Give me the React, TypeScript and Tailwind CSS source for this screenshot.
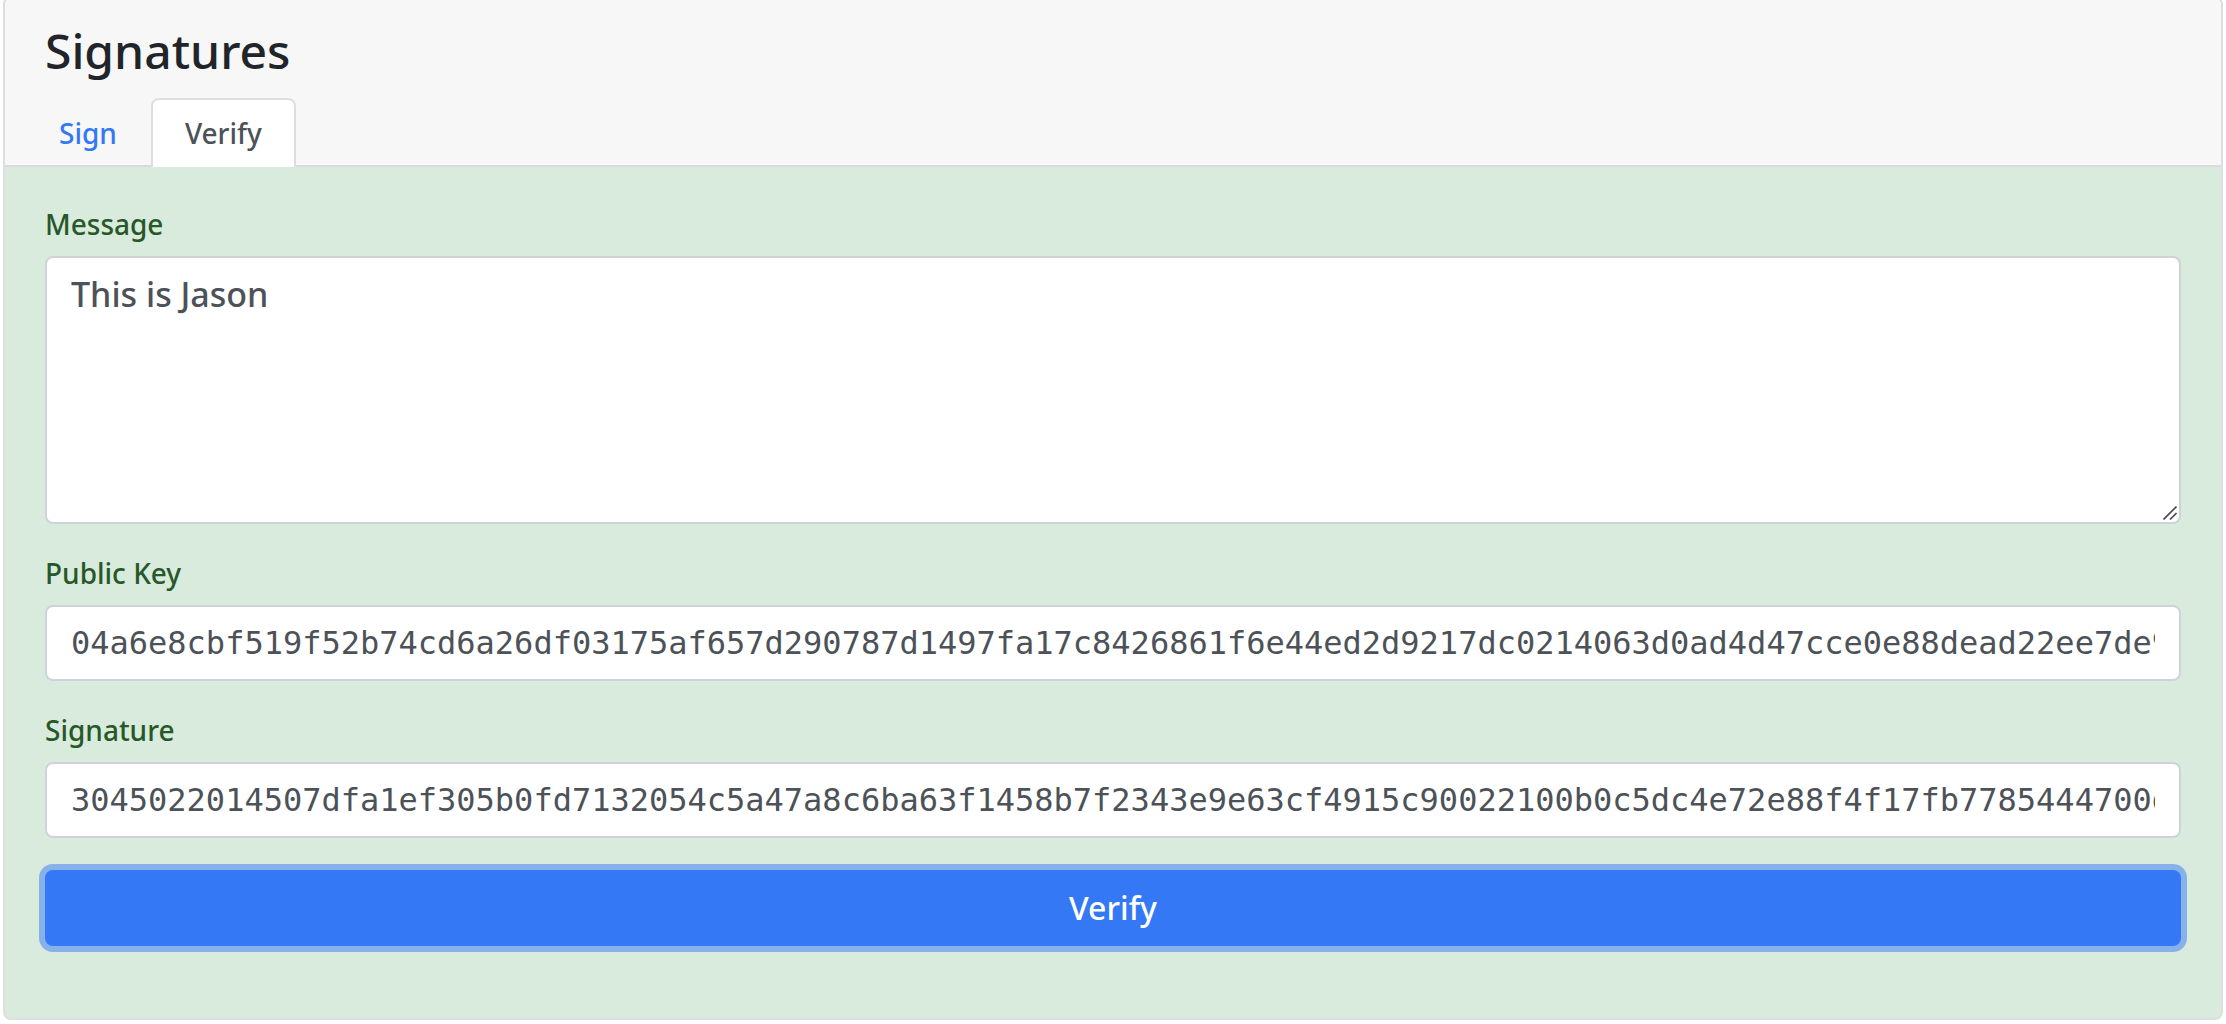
import { useState } from 'react'
import type { ReactNode } from 'react'

const PUBLIC_KEY =
  '04a6e8cbf519f52b74cd6a26df03175af657d290787d1497fa17c8426861f6e44ed2d9217dc0214063d0ad4d47cce0e88dead22ee7de9'
const SIGNATURE =
  '3045022014507dfa1ef305b0fd7132054c5a47a8c6ba63f1458b7f2343e9e63cf4915c90022100b0c5dc4e72e88f4f17fb7785444700d'

const inputClass =
  "block h-[76px] w-full rounded-lg border-2 border-[#ced3da] bg-white px-6 font-['DejaVu_Sans_Mono',monospace] text-[32px] text-[#4c5258] outline-none"

function Field({ id, label, children }: { id: string; label: string; children: ReactNode }) {
  return (
    <div className="mb-8">
      <label htmlFor={id} className="mb-[15px] block text-[28px] leading-[34px] text-[#28572a]">
        {label}
      </label>
      {children}
    </div>
  )
}

function ResizeGrip() {
  return (
    <svg
      className="pointer-events-none absolute right-1 bottom-1 h-[14px] w-[14px]"
      viewBox="0 0 14 14"
      fill="none"
      stroke="#4a4a4a"
      strokeWidth="1.6"
      aria-hidden="true"
    >
      <path d="M0.5 13.5 L13.5 0.5 M7 13.5 L13.5 7" />
    </svg>
  )
}

export default function App() {
  const [message, setMessage] = useState('This is Jason')
  const [publicKey, setPublicKey] = useState(PUBLIC_KEY)
  const [signature, setSignature] = useState(SIGNATURE)

  return (
    <div className="bg-white px-[3px] font-['Noto_Sans',sans-serif] font-medium">
      <main className="-mt-1 overflow-hidden rounded-lg border-2 border-[#dedede] bg-[#d9ebdc]">
        <header className="border-b-2 border-[#dadadd] bg-[#f7f7f7] px-10 pt-6">
          <h1 className="mb-[18px] text-[48px] leading-[58px] text-[#212529]">Signatures</h1>
          <nav className="-mx-5 -mb-0.5 flex text-[28px] leading-[42px]">
            <a
              href="#sign"
              className="rounded-t-lg border-2 border-b-0 border-transparent px-8 pt-3 pb-[13px] text-[#3478f6]"
            >
              Sign
            </a>
            <a
              href="#verify"
              aria-current="page"
              className="rounded-t-lg border-2 border-b-0 border-[#dedede] bg-white px-8 pt-3 pb-[13px] text-[#4c5258]"
            >
              Verify
            </a>
          </nav>
        </header>
        <form className="px-10 pt-10 pb-[72px]" onSubmit={(e) => e.preventDefault()}>
          <Field id="message" label="Message">
            <div className="relative">
              <textarea
                id="message"
                value={message}
                onChange={(e) => setMessage(e.target.value)}
                className="block h-[268px] w-full resize-none rounded-lg border-2 border-[#ced3da] bg-white px-6 py-3 text-[34px] leading-[48px] text-[#4c5258] outline-none"
              />
              <ResizeGrip />
            </div>
          </Field>
          <Field id="public-key" label="Public Key">
            <input
              id="public-key"
              type="text"
              value={publicKey}
              onChange={(e) => setPublicKey(e.target.value)}
              className={inputClass}
            />
          </Field>
          <Field id="signature" label="Signature">
            <input
              id="signature"
              type="text"
              value={signature}
              onChange={(e) => setSignature(e.target.value)}
              className={inputClass}
            />
          </Field>
          <button
            type="submit"
            className="block h-[76px] w-full rounded-lg bg-[#3478f6] text-[32px] leading-[48px] text-white ring-6 ring-[#86b1ea]"
          >
            Verify
          </button>
        </form>
      </main>
    </div>
  )
}
